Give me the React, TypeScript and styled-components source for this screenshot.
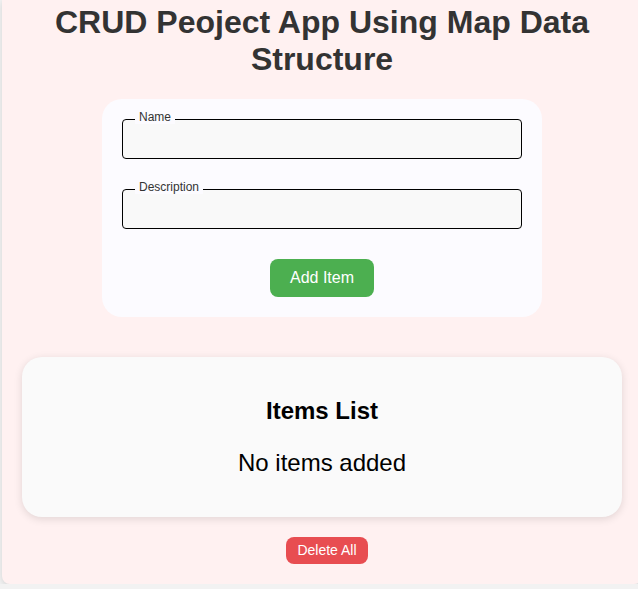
import React, { useState } from "react";
import styled, { createGlobalStyle } from "styled-components";

const GlobalStyle = createGlobalStyle`
  html, body {
    margin: 0;
    padding: 0;
    background: #f2f2f2;
    font-family: "Liberation Sans", Arial, sans-serif;
  }
  * { box-sizing: border-box; }
`;

const Page = styled.div`
  padding: 0 0 0 2px;
  width: 642px;
`;

const Container = styled.div`
  width: 640px;
  background: #fff1f1;
  border-radius: 0 0 8px 8px;
  box-shadow: 0 2px 6px rgba(0, 0, 0, 0.12);
  padding: 4px 20px 20px;
  display: flex;
  flex-direction: column;
  align-items: center;
`;

const Title = styled.h1`
  margin: 0 0 21px;
  font-size: 32px;
  font-weight: bold;
  color: #333;
  text-align: center;
  width: 600px;
`;

const FormCard = styled.div`
  width: 440px;
  background: #fcfbff;
  border-radius: 20px;
  padding: 20px;
  display: flex;
  flex-direction: column;
  align-items: center;
  gap: 30px;
`;

const Field = styled.div`
  position: relative;
  width: 400px;
  height: 40px;
  border: 1px solid #000;
  border-radius: 4px;
  background: #f9f9f9;
`;

const FieldLabel = styled.label`
  position: absolute;
  left: 12px;
  top: -10px;
  padding: 0 4px;
  background: #fcfbff;
  font-size: 12px;
  line-height: 14px;
  color: #333;
`;

const Input = styled.input`
  width: 100%;
  height: 100%;
  border: none;
  background: transparent;
  outline: none;
  padding: 0 12px;
  font-family: inherit;
  font-size: 16px;
`;

const Button = styled.button<{ $variant: "add" | "danger" }>`
  border: none;
  color: #fff;
  font-family: "Liberation Sans", Arial, sans-serif;
  cursor: pointer;
  border-radius: 8px;
  background: ${(p) => (p.$variant === "add" ? "#4caf50" : "#e84d51")};
  font-size: ${(p) => (p.$variant === "add" ? "16px" : "14px")};
  line-height: ${(p) => (p.$variant === "add" ? "normal" : "15px")};
  padding: ${(p) => (p.$variant === "add" ? "10px 20px" : "6px 11px")};
`;

const ListCard = styled.div`
  width: 600px;
  margin-top: 40px;
  background: #fafafa;
  border-radius: 20px;
  box-shadow: 0 2px 8px rgba(0, 0, 0, 0.12);
  padding: 30px 20px 20px;
  display: flex;
  flex-direction: column;
  align-items: center;
`;

const ListTitle = styled.h2`
  margin: 10px 0 0;
  font-size: 24px;
  font-weight: bold;
  color: #000;
`;

const Empty = styled.p`
  margin: 24px 0 20px;
  font-size: 24px;
  color: #000;
`;

const Footer = styled.div`
  margin-top: 20px;
  padding-left: 10px;
`;

export default function App() {
  const [name, setName] = useState("");
  const [desc, setDesc] = useState("");
  return (
    <>
      <GlobalStyle />
      <Page>
        <Container>
          <Title>CRUD Peoject App Using Map Data Structure</Title>
          <FormCard>
            <Field>
              <FieldLabel>Name</FieldLabel>
              <Input value={name} onChange={(e) => setName(e.target.value)} />
            </Field>
            <Field>
              <FieldLabel>Description</FieldLabel>
              <Input value={desc} onChange={(e) => setDesc(e.target.value)} />
            </Field>
            <Button $variant="add">Add Item</Button>
          </FormCard>
          <ListCard>
            <ListTitle>Items List</ListTitle>
            <Empty>No items added</Empty>
          </ListCard>
          <Footer>
            <Button $variant="danger">Delete All</Button>
          </Footer>
        </Container>
      </Page>
    </>
  );
}
